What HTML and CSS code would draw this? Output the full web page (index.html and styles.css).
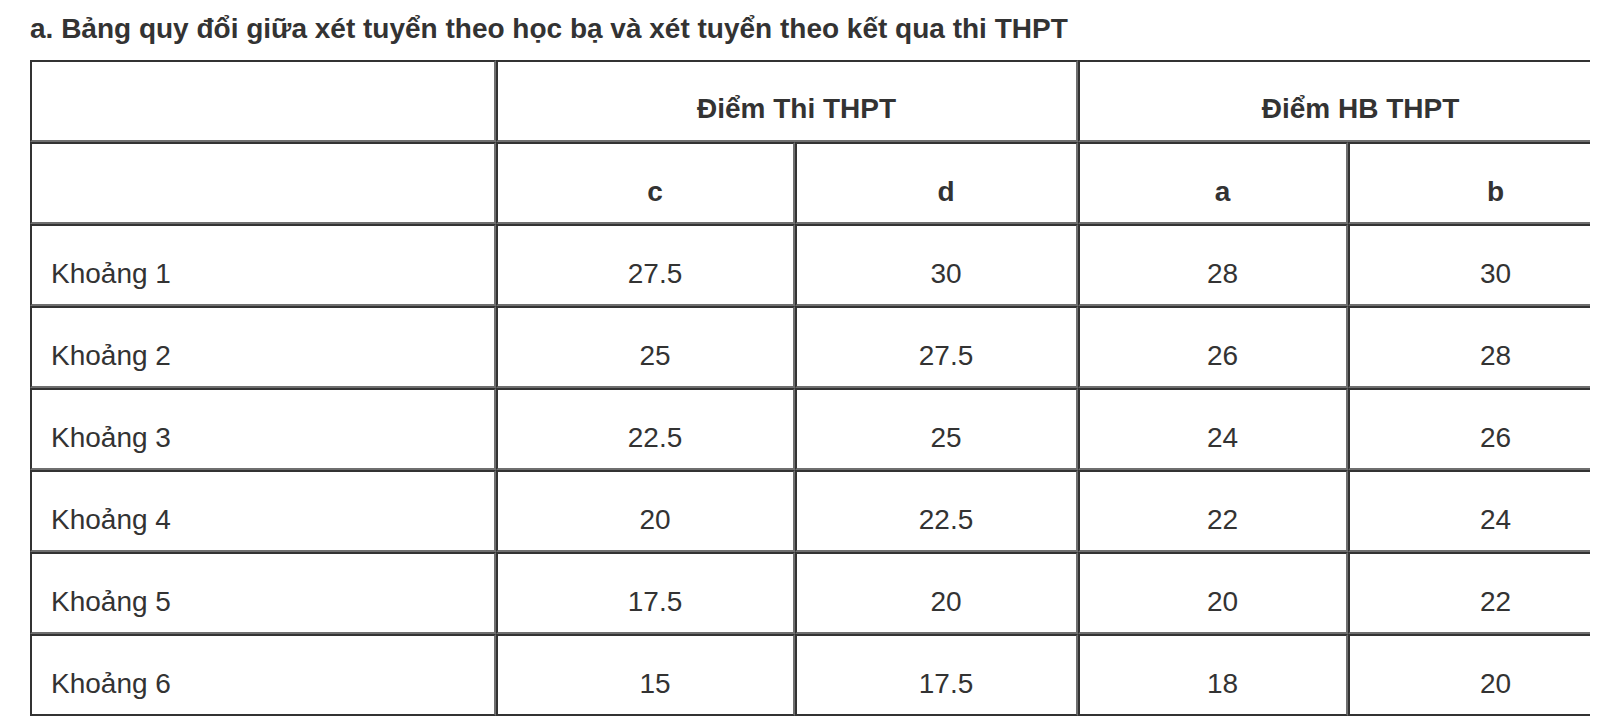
FILE: index.html
```html
<!DOCTYPE html>
<html lang="vi">
<head>
<meta charset="utf-8">
<title>Bảng quy đổi</title>
<link rel="stylesheet" href="styles.css">
</head>
<body>
<h3 class="title">a. Bảng quy đổi giữa xét tuyển theo học bạ và xét tuyển theo kết qua thi THPT</h3>
<div class="wrap">
<table class="grid">
<colgroup>
<col class="c1"><col class="c2"><col class="c3"><col class="c4"><col class="c5">
</colgroup>
<tbody>
<tr class="head"><td></td><td colspan="2">Điểm Thi THPT</td><td colspan="2">Điểm HB THPT</td></tr>
<tr class="head"><td></td><td>c</td><td>d</td><td>a</td><td>b</td></tr>
<tr><td class="lbl">Khoảng 1</td><td>27.5</td><td>30</td><td>28</td><td>30</td></tr>
<tr><td class="lbl">Khoảng 2</td><td>25</td><td>27.5</td><td>26</td><td>28</td></tr>
<tr><td class="lbl">Khoảng 3</td><td>22.5</td><td>25</td><td>24</td><td>26</td></tr>
<tr><td class="lbl">Khoảng 4</td><td>20</td><td>22.5</td><td>22</td><td>24</td></tr>
<tr><td class="lbl">Khoảng 5</td><td>17.5</td><td>20</td><td>20</td><td>22</td></tr>
<tr class="last"><td class="lbl">Khoảng 6</td><td>15</td><td>17.5</td><td>18</td><td>20</td></tr>
</tbody>
</table>
</div>
</body>
</html>
```

FILE: styles.css
```css
html, body {
  margin: 0;
  padding: 0;
  background: #ffffff;
}
body {
  font-family: "Liberation Sans", Arial, Helvetica, sans-serif;
  color: #333333;
}
.title {
  margin: 0 0 14px 0;
  padding: 12px 0 0 30px;
  font-size: 28px;
  line-height: 34px;
  font-weight: bold;
  color: #333333;
}
.wrap {
  margin-left: 30px;
  width: 1560px;
  overflow: hidden;
}
.grid {
  border-collapse: separate;
  border-spacing: 0;
  table-layout: fixed;
  width: 1594px;
}
.c1 { width: 466px; }
.c2 { width: 299px; }
.c3 { width: 283px; }
.c4 { width: 270px; }
.c5 { width: 276px; }
.grid td {
  box-sizing: border-box;
  border-style: solid;
  border-width: 2px;
  border-color: #333333 #6f6f6f #6f6f6f #333333;
  padding: 18px 1px 0 20px;
  line-height: 60px;
  font-size: 28px;
  text-align: center;
  vertical-align: top;
  white-space: nowrap;
}
.grid td.lbl {
  text-align: left;
  padding-left: 19px;
}
.grid .head td {
  font-weight: bold;
}
.grid .head:first-child td {
  padding-top: 16px;
  line-height: 62px;
}
.grid .last td {
  border-bottom-color: #333333;
}
```
